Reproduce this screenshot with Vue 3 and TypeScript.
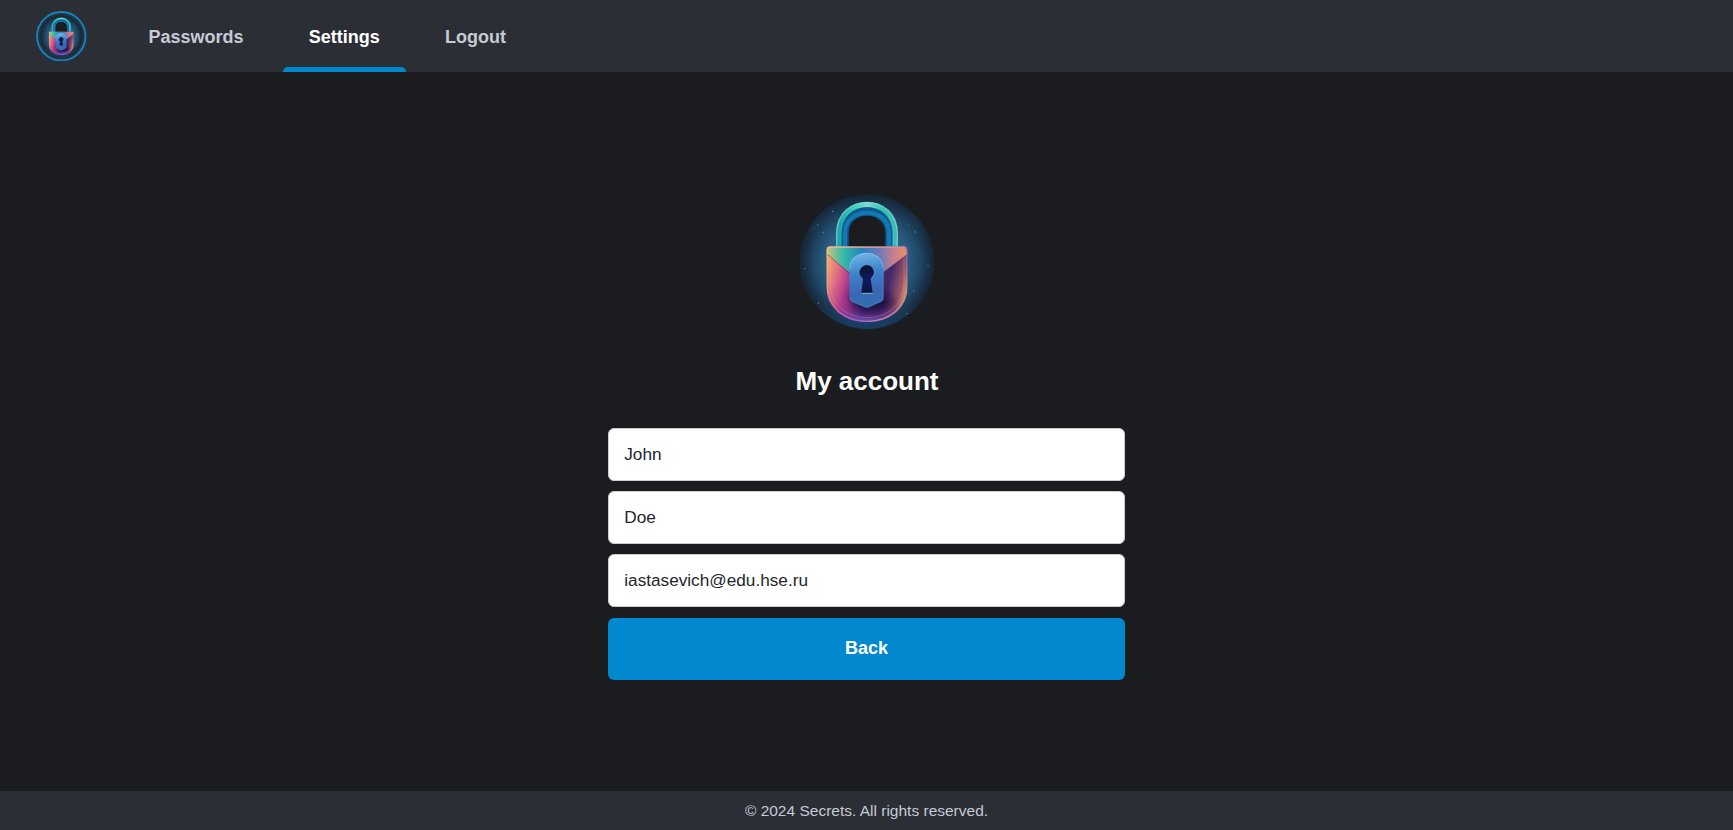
<script setup lang="ts">
import { ref } from 'vue'

interface NavItem { label: string; active?: boolean }

const nav: NavItem[] = [
  { label: 'Passwords' },
  { label: 'Settings', active: true },
  { label: 'Logout' },
]
const firstName = ref('John')
const lastName = ref('Doe')
const email = ref('iastasevich@edu.hse.ru')
const stars = [
  [129, 78, 2.5], [84, 119, 2], [101, 141, 2], [376, 140, 2.5], [358, 118, 1.5],
  [415, 242, 2], [45, 250, 2], [86, 353, 2.5], [373, 317, 2], [352, 385, 2], [73, 127, 1.5],
]
</script>

<template>
  <div class="page">
    <header class="header">
      <svg class="brand" viewBox="0 0 50 50" aria-label="Secrets">
        <defs>
          <radialGradient id="halo" gradientUnits="userSpaceOnUse" cx="232" cy="230" r="204">
            <stop offset="0" stop-color="#2a6c96" />
            <stop offset=".6" stop-color="#295d82" />
            <stop offset=".78" stop-color="#1f4766" />
            <stop offset=".92" stop-color="#182e43" />
            <stop offset=".98" stop-color="#182636" />
            <stop offset="1" stop-color="#1a2029" />
          </radialGradient>
          <linearGradient id="haloFloor" x1="0" y1="0" x2="0" y2="1">
            <stop offset="0" stop-color="#12283a" stop-opacity=".5" />
            <stop offset=".35" stop-color="#205078" stop-opacity="0" />
            <stop offset=".8" stop-color="#205078" stop-opacity="0" />
            <stop offset="1" stop-color="#174b83" stop-opacity=".6" />
          </linearGradient>
          <linearGradient id="shackle" gradientUnits="userSpaceOnUse" x1="138" y1="120" x2="326" y2="120">
            <stop offset="0" stop-color="#159eaa" />
            <stop offset=".3" stop-color="#39cfbd" />
            <stop offset=".5" stop-color="#7fdccb" />
            <stop offset=".75" stop-color="#2fc3b7" />
            <stop offset="1" stop-color="#45b9ba" />
          </linearGradient>
          <linearGradient id="body" gradientUnits="userSpaceOnUse" x1="110" y1="250" x2="354" y2="310">
            <stop offset="0" stop-color="#f5a56f" />
            <stop offset=".13" stop-color="#df7084" />
            <stop offset=".28" stop-color="#b23a8b" />
            <stop offset=".55" stop-color="#3b2468" />
            <stop offset=".76" stop-color="#43276a" />
            <stop offset=".92" stop-color="#9a5866" />
            <stop offset="1" stop-color="#e5a267" />
          </linearGradient>
          <linearGradient id="bodyFloor" gradientUnits="userSpaceOnUse" x1="0" y1="290" x2="0" y2="412">
            <stop offset="0" stop-color="#752e98" stop-opacity="0" />
            <stop offset=".6" stop-color="#8e2b98" stop-opacity=".15" />
            <stop offset="1" stop-color="#6b55c2" stop-opacity=".95" />
          </linearGradient>
          <linearGradient id="flap" gradientUnits="userSpaceOnUse" x1="110" y1="0" x2="354" y2="0">
            <stop offset="0" stop-color="#d6c277" />
            <stop offset=".2" stop-color="#37bba5" />
            <stop offset=".43" stop-color="#2484bd" />
            <stop offset=".65" stop-color="#6e78b8" />
            <stop offset=".84" stop-color="#cc8089" />
            <stop offset="1" stop-color="#e99167" />
          </linearGradient>
          <linearGradient id="edge" gradientUnits="userSpaceOnUse" x1="112" y1="200" x2="350" y2="390">
            <stop offset="0" stop-color="#f1c67e" />
            <stop offset=".4" stop-color="#dd6790" />
            <stop offset=".65" stop-color="#9a62c4" />
            <stop offset="1" stop-color="#dba080" />
          </linearGradient>
          <linearGradient id="plate" gradientUnits="userSpaceOnUse" x1="215" y1="202" x2="245" y2="366">
            <stop offset="0" stop-color="#72b6e6" />
            <stop offset=".35" stop-color="#3e84ca" />
            <stop offset=".7" stop-color="#3b67b5" />
            <stop offset="1" stop-color="#306fae" />
          </linearGradient>
          <linearGradient id="hole" gradientUnits="userSpaceOnUse" x1="0" y1="240" x2="0" y2="324">
            <stop offset="0" stop-color="#071535" />
            <stop offset=".55" stop-color="#101b5c" />
            <stop offset="1" stop-color="#0a1536" />
          </linearGradient>
          <filter id="soft" x="-20%" y="-20%" width="140%" height="140%">
            <feGaussianBlur stdDeviation="12" />
          </filter>
          <clipPath id="bodyClip">
            <path d="M122 183H342Q354 183 354 197V300C354 369 300 411 232 411S110 369 110 300V197Q110 183 122 183Z" />
          </clipPath>
          <symbol id="padlock" viewBox="28 26 408 408">
            <circle cx="232" cy="230" r="203" fill="url(#halo)" />
            <circle cx="232" cy="230" r="200" fill="url(#haloFloor)" />
            <circle v-for="(s, i) in stars" :key="i" :cx="s[0]" :cy="s[1]" :r="s[2]" fill="#3793b8" />
            <path d="M172 190V141C172 68 292 68 292 141V190Z" fill="#1b1c20" />
            <path d="M159 186V143C159 50 305 50 305 143V186" fill="none" stroke="#0d5a8e" stroke-width="36" />
            <path d="M166 186V143C166 62 298 62 298 143V186" fill="none" stroke="#1478b4" stroke-width="12" />
            <path d="M148 186V144C148 29 316 29 316 144V186" fill="none" stroke="url(#shackle)" stroke-width="15" />
            <path d="M141 184V144C141 20 323 20 323 144V184" fill="none" stroke="#8fdfd4" stroke-width="4" opacity=".7" />
            <g clip-path="url(#bodyClip)">
              <path d="M110 183H354V411H110Z" fill="url(#body)" />
              <path d="M110 290H354V411H110Z" fill="url(#bodyFloor)" />
              <path d="M178 320L280 310L315 355Q265 400 200 375Z" fill="#190a38" opacity=".8" filter="url(#soft)" />
              <path d="M110 205L190 270H270L354 206V183H110Z" fill="url(#flap)" />
              <path d="M112 206L184 268M278 264L352 208" stroke="#422e68" stroke-width="3" opacity=".55" />
              <path d="M122 185H342Q352 185 352 197V300C352 367 299 408 232 408S112 367 112 300V197Q112 185 122 185Z" fill="none" stroke="url(#edge)" stroke-width="4" />
              <path d="M122 215V297C122 360 175 397 232 397S343 360 343 297V215" fill="none" stroke="#efa381" stroke-width="3" opacity=".3" />
              <path d="M116 185H346" stroke="#d5b79b" stroke-width="3" />
            </g>
            <path d="M179 250C179 186 282 186 282 250V338Q282 346 274 350L240 365Q232 369 223 365L187 350Q179 346 179 338Z" fill="url(#plate)" />
            <path d="M181 250C181 189 280 189 280 250" fill="none" stroke="#94cced" stroke-width="3" opacity=".6" />
            <path d="M181 337Q181 345 188 348L224 363Q232 367 240 363L280 344V250" fill="none" stroke="#4f91d0" stroke-width="2" opacity=".6" />
            <path d="M220 280A22 22 0 1 1 243 280L249 323H215Z" fill="url(#hole)" />
            <path d="M216 324H249" stroke="#9fc8e6" stroke-width="2.5" />
            <path d="M251 249Q260 265 246 279" fill="none" stroke="#68a6dc" stroke-width="2" />
          </symbol>
        </defs>
        <circle cx="25" cy="25" r="24" fill="#25303c" stroke="#1482bc" stroke-width="1.9" />
        <use href="#padlock" x="4.2" y="4.2" width="41.6" height="41.6" />
      </svg>
      <nav class="nav">
        <a v-for="item in nav" :key="item.label" class="link" :class="{ active: item.active }">{{ item.label }}</a>
      </nav>
    </header>

    <main class="main">
      <svg class="hero" viewBox="0 0 136 136" aria-hidden="true">
        <use href="#padlock" width="136" height="136" />
      </svg>
      <h1 class="title">My account</h1>
      <form class="form" @submit.prevent>
        <input v-model="firstName" class="field" type="text" aria-label="First name" />
        <input v-model="lastName" class="field" type="text" aria-label="Last name" />
        <input v-model="email" class="field" type="text" aria-label="Email" />
        <button class="back" type="button">Back</button>
      </form>
    </main>

    <footer class="footer">© 2024 Secrets. All rights reserved.</footer>
  </div>
</template>

<style>
body {
  margin: 0;
  background: #1b1c20;
}
</style>

<style scoped>
.page {
  display: flex;
  flex-direction: column;
  height: 100vh;
  overflow: hidden;
  background: #1b1c20;
  color: #fff;
  font-family: "Liberation Sans", Arial, sans-serif;
}
.header {
  display: flex;
  flex: none;
  align-items: center;
  box-sizing: border-box;
  height: 72.4px;
  padding-left: 36px;
  background: #2c2e36;
}
.brand {
  width: 50.5px;
  height: 50.5px;
}
.nav {
  display: flex;
  gap: 13.2px;
  height: 100%;
  margin-left: 36px;
}
.link {
  position: relative;
  display: flex;
  align-items: center;
  box-sizing: border-box;
  padding: 6px 26px 3px;
  color: #c5cad5;
  font-size: 18px;
  font-weight: 700;
}
.link.active {
  color: #fff;
}
.link.active::after {
  content: "";
  position: absolute;
  right: 0;
  bottom: 0;
  left: 0;
  height: 5.4px;
  border-radius: 5px 5px 0 0;
  background: #0288ce;
}
.main {
  display: flex;
  flex: 1;
  flex-direction: column;
  align-items: center;
  padding-top: 121.25px;
}
.hero {
  flex: none;
  width: 136px;
  height: 136px;
}
.title {
  margin: 36px 0 31px;
  padding-left: 1px;
  font-size: 26px;
  line-height: 31px;
}
.form {
  display: flex;
  flex-direction: column;
  gap: 10.3px;
  width: 517.5px;
}
.field {
  box-sizing: border-box;
  width: 100%;
  height: 53px;
  padding: 0 15.5px;
  border: 1px solid #ccc;
  border-radius: 6px;
  outline: 0;
  background: #fff;
  color: #242529;
  font: 17.2px "Liberation Sans", Arial, sans-serif;
}
.back {
  height: 62px;
  margin-top: .4px;
  padding: 0 0 1px;
  border: 0;
  border-radius: 6px;
  background: #0288ce;
  color: #fff;
  font: 700 18px "Liberation Sans", Arial, sans-serif;
}
.footer {
  display: flex;
  flex: none;
  align-items: center;
  justify-content: center;
  height: 38.8px;
  background: #2c2e36;
  color: #c5cad5;
  font-size: 15.5px;
}
</style>
